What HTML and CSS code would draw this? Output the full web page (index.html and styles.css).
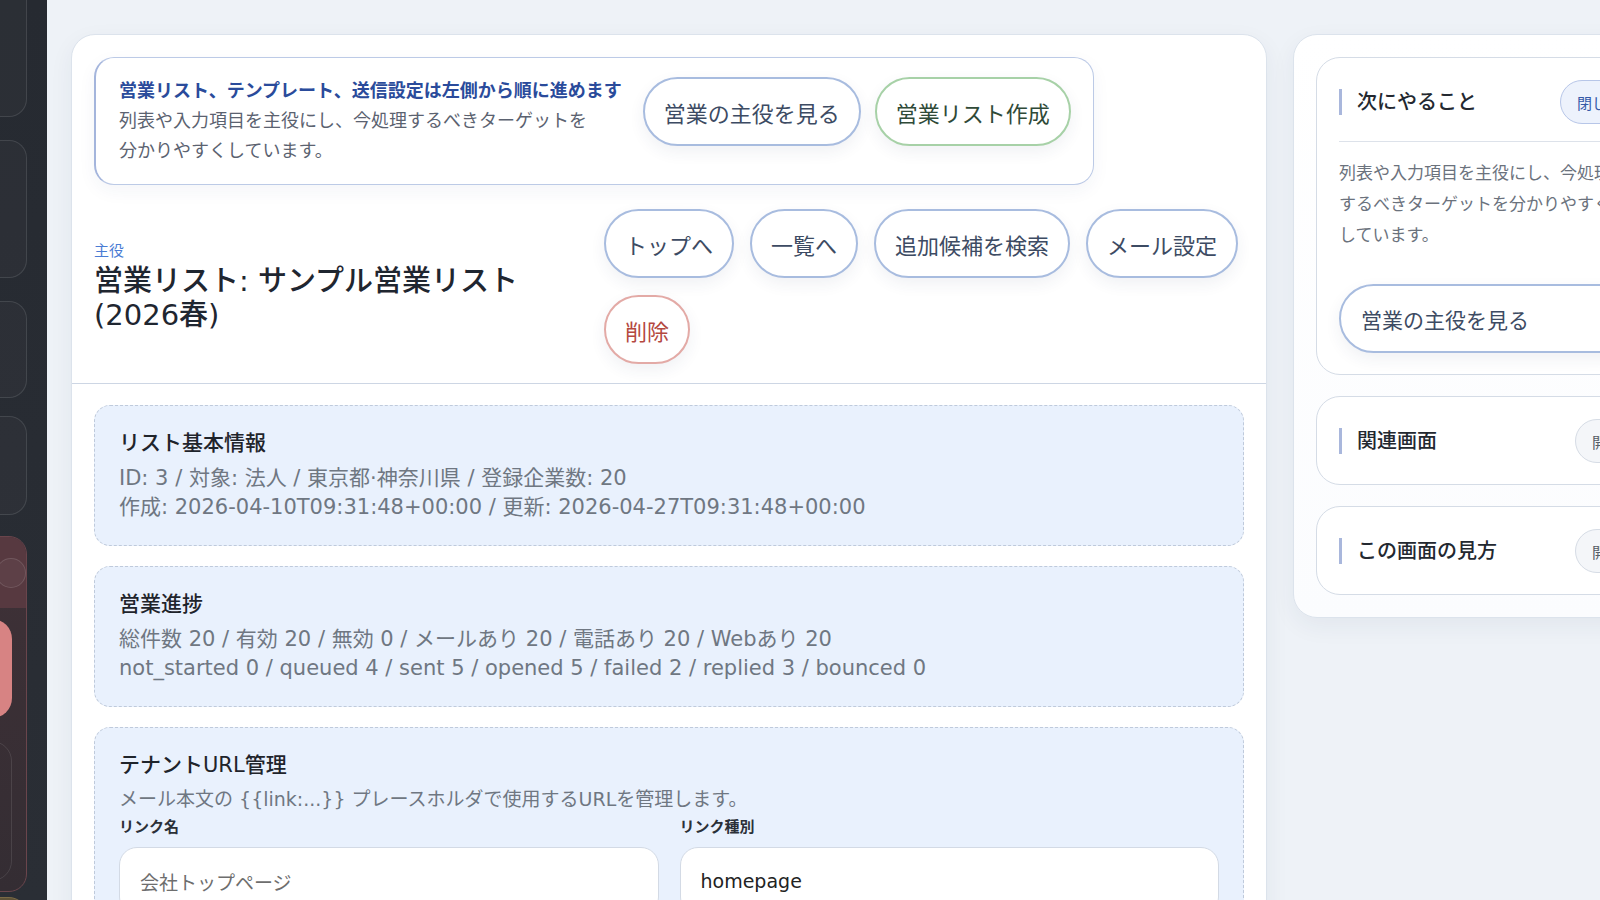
FILE: index.html
```html
<!DOCTYPE html>
<html lang="ja">
<head>
    <meta charset="UTF-8">
    <meta name="viewport" content="width=device-width, initial-scale=1.0">
    <title>営業リスト: サンプル営業リスト(2026春)</title>
    <link rel="stylesheet" href="styles.css">
</head>
<body>

<div class="app">

    <!-- サイドバー（横スクロールで右端だけ見えている） -->
    <aside class="sidebar">
        <div class="nav-item nav-first"></div>
        <div class="nav-item nav-second"></div>
        <div class="nav-item nav-third"></div>
        <div class="nav-item nav-fourth"></div>
        <div class="nav-group">
            <div class="nav-group-head"><span class="nav-dot"></span></div>
            <div class="nav-pill"></div>
            <div class="nav-sub"></div>
        </div>
        <div class="nav-item nav-gold"></div>
    </aside>

    <div class="workspace">

        <main class="main-card">
            <header class="card-head">
                <div class="notice">
                    <div class="notice-text">
                        <p class="notice-title">営業リスト、テンプレート、送信設定は左側から順に進めます</p>
                        <p class="notice-desc">列表や入力項目を主役にし、今処理するべきターゲットを分かりやすくしています。</p>
                    </div>
                    <div class="notice-actions">
                        <button type="button" class="pill-btn">営業の主役を見る</button>
                        <button type="button" class="pill-btn pill-green">営業リスト作成</button>
                    </div>
                </div>

                <div class="head-row">
                    <div class="title-block">
                        <span class="eyebrow">主役</span>
                        <h1>営業リスト: サンプル営業リスト(2026春)</h1>
                    </div>
                    <div class="head-actions">
                        <button type="button" class="pill-btn">トップへ</button>
                        <button type="button" class="pill-btn">一覧へ</button>
                        <button type="button" class="pill-btn">追加候補を検索</button>
                        <button type="button" class="pill-btn">メール設定</button>
                        <button type="button" class="pill-btn pill-danger">削除</button>
                    </div>
                </div>
            </header>

            <div class="card-body">
                <section class="info-box">
                    <h2>リスト基本情報</h2>
                    <p>ID: 3 / 対象: 法人 / 東京都·神奈川県 / 登録企業数: 20</p>
                    <p>作成: 2026-04-10T09:31:48+00:00 / 更新: 2026-04-27T09:31:48+00:00</p>
                </section>

                <section class="info-box">
                    <h2>営業進捗</h2>
                    <p>総件数 20 / 有効 20 / 無効 0 / メールあり 20 / 電話あり 20 / Webあり 20</p>
                    <p>not_started 0 / queued 4 / sent 5 / opened 5 / failed 2 / replied 3 / bounced 0</p>
                </section>

                <section class="info-box">
                    <h2>テナントURL管理</h2>
                    <p class="box-desc">メール本文の {{link:...}} プレースホルダで使用するURLを管理します。</p>
                    <div class="field-grid">
                        <div class="field">
                            <label for="linkName">リンク名</label>
                            <input type="text" id="linkName" class="text-input muted" value="会社トップページ">
                        </div>
                        <div class="field">
                            <label for="linkType">リンク種別</label>
                            <input type="text" id="linkType" class="text-input" value="homepage">
                        </div>
                    </div>
                </section>
            </div>
        </main>

        <aside class="side-panel">
            <div class="panel-card">
                <div class="panel-head">
                    <h3>次にやること</h3>
                    <button type="button" class="small-pill small-active">閉じる</button>
                </div>
                <p class="panel-text">列表や入力項目を主役にし、今処理するべきターゲットを分かりやすくしています。</p>
                <button type="button" class="pill-btn pill-wide">営業の主役を見る</button>
            </div>

            <div class="panel-card">
                <div class="panel-head no-rule">
                    <h3>関連画面</h3>
                    <button type="button" class="small-pill">開く</button>
                </div>
            </div>

            <div class="panel-card">
                <div class="panel-head no-rule">
                    <h3>この画面の見方</h3>
                    <button type="button" class="small-pill">開く</button>
                </div>
            </div>
        </aside>

    </div>
</div>

</body>
</html>
```

FILE: styles.css
```css
/* リセット */
* {
    margin: 0;
    padding: 0;
    box-sizing: border-box;
}

body {
    font-family: "DejaVu Sans", "Noto Sans CJK JP", sans-serif;
    background: #eef2f7;
    color: #252a31;
    overflow: hidden;
}

button,
input {
    font-family: inherit;
}

.app {
    display: flex;
    height: 100vh;
    overflow: hidden;
}

/* サイドバー */
.sidebar {
    flex: 0 0 47px;
    background: linear-gradient(180deg, #262a31 0%, #2a2e35 100%);
    display: flex;
    flex-direction: column;
    align-items: flex-end;
    padding-right: 20px;
    overflow: hidden;
}

.nav-item {
    width: 90px;
    flex-shrink: 0;
    border: 1px solid rgba(255, 255, 255, 0.11);
    border-radius: 18px;
    background: rgba(255, 255, 255, 0.025);
}

.nav-first {
    height: 137px;
    margin-top: -20px;
}

.nav-second {
    height: 138px;
    margin-top: 23px;
}

.nav-third {
    height: 97px;
    margin-top: 23px;
}

.nav-fourth {
    height: 99px;
    margin-top: 18px;
}

.nav-group {
    width: 90px;
    height: 356px;
    flex-shrink: 0;
    margin-top: 21px;
    border: 1px solid #6a454c;
    border-radius: 18px;
    background: linear-gradient(180deg, #3f3137 0%, #342d33 100%);
    display: flex;
    flex-direction: column;
    align-items: flex-end;
    overflow: hidden;
}

.nav-group-head {
    width: 100%;
    height: 71px;
    flex-shrink: 0;
    background: #573940;
    display: flex;
    align-items: center;
    padding-left: 58px;
}

.nav-dot {
    width: 30px;
    height: 30px;
    border-radius: 50%;
    border: 1px solid rgba(255, 255, 255, 0.12);
    background: rgba(255, 255, 255, 0.04);
}

.nav-pill {
    width: 70px;
    height: 99px;
    flex-shrink: 0;
    margin: 11px 14px 0 0;
    border-radius: 20px;
    background: #d78383;
}

.nav-sub {
    width: 70px;
    height: 140px;
    flex-shrink: 0;
    margin: 23px 14px 0 0;
    border: 1px solid rgba(255, 255, 255, 0.1);
    border-radius: 20px;
}

.nav-gold {
    height: 100px;
    margin-top: 5px;
    background: #5e5238;
    border-color: #7a6a46;
}

/* 作業エリア */
.workspace {
    display: flex;
    align-items: flex-start;
    gap: 26px;
    padding: 34px 0 0 24px;
    flex-shrink: 0;
}

.main-card {
    width: 1196px;
    flex-shrink: 0;
    background: #fff;
    border: 1px solid #dce3ec;
    border-radius: 24px;
    box-shadow: 0 8px 24px rgba(30, 50, 90, 0.06);
}

.card-head {
    padding: 22px 22px 19px;
    border-bottom: 1px solid #cdd6e4;
}

/* 案内ボックス */
.notice {
    display: inline-flex;
    align-items: flex-start;
    gap: 21px;
    padding: 18px 22px 18px 23px;
    border: 1.5px solid #bccae6;
    border-left: 2px solid #a4b5dc;
    border-radius: 20px;
    background: #fff;
    box-shadow: 0 6px 18px rgba(40, 60, 110, 0.05);
}

.notice-title {
    font-size: 18px;
    line-height: 30px;
    font-weight: 700;
    color: #2a4b9b;
    white-space: nowrap;
}

.notice-desc {
    font-size: 18px;
    line-height: 30px;
    color: #5b6270;
    max-width: 478px;
}

.notice-actions {
    display: flex;
    gap: 14px;
    padding-top: 1px;
}

/* 丸ボタン */
.pill-btn {
    height: 69px;
    padding: 0 19px;
    font-size: 22px;
    color: #3d4b63;
    background: #fff;
    border: 2px solid #a8bcdf;
    border-radius: 999px;
    box-shadow: 0 6px 16px rgba(40, 60, 100, 0.07);
    cursor: pointer;
    white-space: nowrap;
}

.pill-green {
    border-color: #a7d1a7;
    color: #2f4a38;
}

.pill-danger {
    border-color: #e3aaa6;
    color: #b4483f;
}

/* タイトル行 */
.head-row {
    display: flex;
    align-items: center;
    margin-top: 24px;
    gap: 24px;
}

.title-block {
    flex: 1;
    min-width: 0;
}

.eyebrow {
    display: block;
    font-size: 15px;
    line-height: 18px;
    color: #4a7cd4;
    margin-bottom: 4px;
}

h1 {
    font-size: 29px;
    line-height: 34px;
    font-weight: 500;
    color: #1f2630;
    max-width: 490px;
}

.head-actions {
    flex: 0 0 640px;
    display: flex;
    flex-wrap: wrap;
    gap: 17px 16px;
}

/* 本文 */
.card-body {
    padding: 21px 22px;
    display: flex;
    flex-direction: column;
    gap: 20px;
}

.info-box {
    background: #e9f1fd;
    border: 1px dashed #bfcadb;
    border-radius: 16px;
    padding: 22px 24px 23px;
}

.info-box h2 {
    font-size: 21px;
    line-height: 30px;
    font-weight: 500;
    color: #1f242b;
    margin-bottom: 6px;
}

.info-box p {
    font-size: 21px;
    line-height: 29px;
    color: #6f7782;
}

.info-box p.box-desc {
    font-size: 19px;
    line-height: 26px;
}

.field-grid {
    display: grid;
    grid-template-columns: 1fr 1fr;
    gap: 21px;
    margin-top: 4px;
}

.field label {
    display: block;
    font-size: 15px;
    line-height: 22px;
    font-weight: 700;
    color: #2b3038;
    margin-bottom: 9px;
}

.text-input {
    width: 100%;
    height: 68px;
    padding: 0 20px;
    font-size: 19px;
    color: #222;
    background: #fff;
    border: 1px solid #d3dae5;
    border-radius: 18px;
    outline: none;
}

.text-input.muted {
    color: #6e6e6e;
}

/* 右パネル */
.side-panel {
    width: 392px;
    flex-shrink: 0;
    padding: 22px;
    display: flex;
    flex-direction: column;
    gap: 21px;
    background: linear-gradient(180deg, #ffffff 0%, #fbfcfe 100%);
    border: 1px solid #dce3ec;
    border-radius: 24px;
    box-shadow: 0 8px 24px rgba(30, 50, 90, 0.06);
}

.panel-card {
    padding: 22px 22px 21px;
    border: 1.5px solid #d5dce6;
    border-radius: 24px;
    background: #fff;
}

.panel-head {
    display: flex;
    align-items: center;
    justify-content: space-between;
    padding-bottom: 17px;
    border-bottom: 1px solid #dde2ea;
}

.panel-head.no-rule {
    padding-bottom: 0;
    border-bottom: none;
}

.panel-head h3 {
    font-size: 20px;
    line-height: 26px;
    font-weight: 500;
    color: #232830;
    border-left: 3px solid #a9b7dc;
    padding-left: 15px;
}

.small-pill {
    height: 44px;
    padding: 0 16px;
    font-size: 15px;
    color: #555c66;
    background: #f4f6f9;
    border: 1px solid #d6dce5;
    border-radius: 999px;
    cursor: pointer;
}

.small-pill.small-active {
    color: #3559a8;
    background: #edf2fc;
    border-color: #b7c6e8;
}

.panel-text {
    margin-top: 16px;
    font-size: 17px;
    line-height: 31px;
    color: #6b727d;
    max-width: 288px;
}

.pill-wide {
    width: 100%;
    margin-top: 33px;
    text-align: left;
    padding: 0 20px;
    font-size: 21px;
}
```
